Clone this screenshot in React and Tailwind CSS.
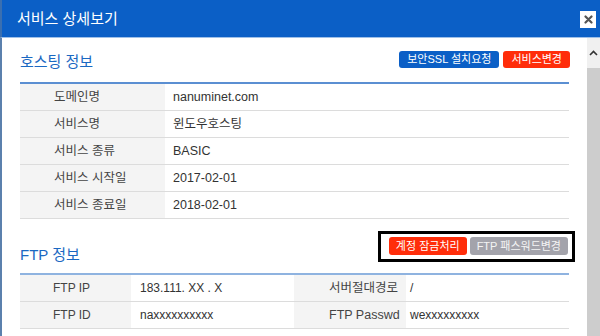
import React from "react";

const font = "font-['Liberation_Sans','Noto_Sans_CJK_KR',sans-serif]";

function Row({ label, value }) {
  return (
    <div className="flex h-[27px] border-b border-[#dcdcdc]">
      <div className="w-[145px] bg-[#f4f4f4] pl-[34px] flex items-center text-[12.5px] text-[#444]">{label}</div>
      <div className="flex-1 pl-[8px] flex items-center text-[12.5px] text-[#333]">{value}</div>
    </div>
  );
}

function FtpRow({ l1, v1, l2, v2 }) {
  return (
    <div className="flex h-[27px] border-b border-[#dcdcdc]">
      <div className="w-[111px] bg-[#f4f4f4] pl-[33px] flex items-center text-[12px] text-[#444]">{l1}</div>
      <div className="w-[163px] pl-[9px] flex items-center text-[12px] text-[#333]">{v1}</div>
      <div className="w-[112px] bg-[#f4f4f4] pl-[35px] flex items-center text-[12.5px] text-[#444]">{l2}</div>
      <div className="flex-1 pl-[4px] flex items-center text-[12px] text-[#333]">{v2}</div>
    </div>
  );
}

export default function App() {
  return (
    <div className={`w-[600px] h-[336px] overflow-hidden flex flex-col bg-white ${font}`}>
      <div className="h-[37px] shrink-0 bg-[#0b5fc6] flex items-center justify-between pl-[15px] pr-[4px] border-l-2 border-[#3a6fb0]">
        <span className="text-white text-[15px] leading-none">서비스 상세보기</span>
        <div className="w-[16px] h-[17px] bg-white flex items-center justify-center mt-[1px]">
          <svg width="9" height="9" viewBox="0 0 9 9">
            <path d="M1.5 1.5 L7.5 7.5 M7.5 1.5 L1.5 7.5" stroke="#555" strokeWidth="2.2" strokeLinecap="round" />
          </svg>
        </div>
      </div>
      <div className="flex flex-1 min-h-0 border-t border-[#9fc0e8] border-l-2 border-l-[#5b80ad]">
        <div className="flex-1 pl-[18px] pr-[18px]">
          <div className="flex items-center justify-between h-[44px]">
            <span className="text-[#1a68c2] text-[15px] leading-none mt-[2px]">호스팅 정보</span>
            <div className="flex gap-[4px] mt-[-1px] mr-[-1px]">
              <span className="h-[17px] px-[8px] bg-[#0b5fc6] rounded-[3px] text-white text-[11px] flex items-center">보안SSL 설치요청</span>
              <span className="h-[17px] px-[8px] bg-[#ff2d0a] rounded-[3px] text-white text-[11px] flex items-center">서비스변경</span>
            </div>
          </div>
          <div className="border-t-2 border-[#5b8fd2]">
            <Row label="도메인명" value="nanuminet.com" />
            <Row label="서비스명" value="윈도우호스팅" />
            <Row label="서비스 종류" value="BASIC" />
            <Row label="서비스 시작일" value="2017-02-01" />
            <Row label="서비스 종료일" value="2018-02-01" />
          </div>
          <div className="flex items-center justify-between h-[54px]">
            <span className="text-[#1a68c2] text-[15px] leading-none mt-[16px]">FTP 정보</span>
            <div className="flex gap-[3px] border-[3px] border-black pl-[8px] pr-[4px] pt-[3px] pb-[4px] mr-[-6px] mt-[1px]">
              <span className="h-[18px] px-[7px] bg-[#ff2d0a] rounded-[3px] text-white text-[11px] flex items-center">계정 잠금처리</span>
              <span className="h-[18px] px-[7px] bg-[#a3a3ab] rounded-[3px] text-[#f4f4f4] text-[11px] flex items-center">FTP 패스워드변경</span>
            </div>
          </div>
          <div className="border-t-2 border-[#8fb3e0]">
            <FtpRow l1="FTP IP" v1="183.111. XX . X" l2="서버절대경로" v2="/" />
            <FtpRow l1="FTP ID" v1="naxxxxxxxxxx" l2="FTP Passwd" v2="wexxxxxxxxx" />
          </div>
        </div>
        <div className="w-[13px] shrink-0 flex flex-col">
          <div className="h-[30px] bg-[#f0f0f0] flex items-center justify-center">
            <svg width="9" height="6" viewBox="0 0 9 6">
              <path d="M1 5 L4.5 1.5 L8 5" stroke="#333" strokeWidth="1.6" fill="none" />
            </svg>
          </div>
          <div className="flex-1 bg-[#cdcdcd]"></div>
        </div>
      </div>
    </div>
  );
}
